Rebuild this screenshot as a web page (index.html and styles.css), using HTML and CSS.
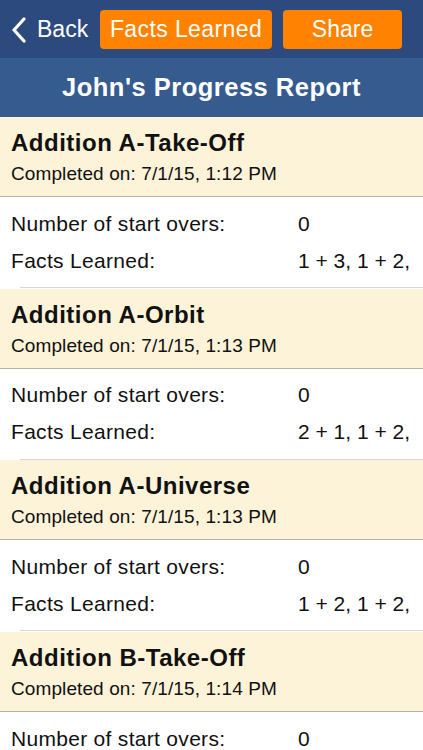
FILE: index.html
```html
<!DOCTYPE html>
<html>
<head>
<meta charset="utf-8">
<link rel="stylesheet" href="styles.css">
</head>
<body>
<div class="nav">
  <div class="back">
    <svg class="chev" width="16" height="26" viewBox="0 0 16 26"><path d="M13 2 L3 13 L13 24" fill="none" stroke="#fff" stroke-width="3.2" stroke-linecap="round" stroke-linejoin="round"/></svg>
    <span>Back</span>
  </div>
  <div class="btn facts">Facts Learned</div>
  <div class="btn share">Share</div>
</div>
<div class="titlebar">John's Progress Report</div>

<div class="section">
  <div class="head">
    <div class="name">Addition A-Take-Off</div>
    <div class="date">Completed on: 7/1/15, 1:12 PM</div>
  </div>
  <div class="rows">
    <div class="row"><span class="label">Number of start overs:</span><span class="val">0</span></div>
    <div class="row"><span class="label">Facts Learned:</span><span class="val">1 + 3, 1 + 2,</span></div>
  </div>
</div>

<div class="section">
  <div class="head">
    <div class="name">Addition A-Orbit</div>
    <div class="date">Completed on: 7/1/15, 1:13 PM</div>
  </div>
  <div class="rows">
    <div class="row"><span class="label">Number of start overs:</span><span class="val">0</span></div>
    <div class="row"><span class="label">Facts Learned:</span><span class="val">2 + 1, 1 + 2,</span></div>
  </div>
</div>

<div class="section">
  <div class="head">
    <div class="name">Addition A-Universe</div>
    <div class="date">Completed on: 7/1/15, 1:13 PM</div>
  </div>
  <div class="rows">
    <div class="row"><span class="label">Number of start overs:</span><span class="val">0</span></div>
    <div class="row"><span class="label">Facts Learned:</span><span class="val">1 + 2, 1 + 2,</span></div>
  </div>
</div>

<div class="section">
  <div class="head">
    <div class="name">Addition B-Take-Off</div>
    <div class="date">Completed on: 7/1/15, 1:14 PM</div>
  </div>
  <div class="rows">
    <div class="row"><span class="label">Number of start overs:</span><span class="val">0</span></div>
    <div class="row"><span class="label">Facts Learned:</span><span class="val">1 + 2, 1 + 2,</span></div>
  </div>
</div>
</body>
</html>
```
FILE: styles.css
```css
* { box-sizing: border-box; }
html, body { margin: 0; padding: 0; }
body {
  width: 423px;
  height: 750px;
  overflow: hidden;
  background: #fff;
  font-family: "Liberation Sans", Arial, sans-serif;
  color: #111;
}
.nav {
  height: 58px;
  background: #2c4a7e;
  display: flex;
  align-items: center;
  padding-left: 11px;
}
.back {
  display: flex;
  align-items: center;
  color: #fff;
  font-size: 23px;
  width: 89px;
}
.chev { margin-right: 10px; margin-top: 1px; }
.btn {
  height: 39px;
  background: #ff8200;
  color: #fff;
  border-radius: 4px;
  display: flex;
  align-items: center;
  justify-content: center;
  font-size: 23px;
  margin-top: 1px;
}
.facts { width: 172px; letter-spacing: 0.4px; }
.share { width: 119px; margin-left: 11px; }
.titlebar {
  height: 59px;
  background: #365b8e;
  color: #fff;
  font-weight: bold;
  font-size: 25.5px;
  letter-spacing: 0.5px;
  display: flex;
  align-items: center;
  justify-content: center;
  padding-bottom: 1px;
}
.section { height: 171.7px; }
.head {
  height: 80px;
  background: #fdf3d8;
  border-bottom: 1px solid #b5b3ac;
  padding: 13px 0 0 11px;
}
.name {
  font-weight: bold;
  font-size: 24px;
  letter-spacing: 0.5px;
  line-height: 26px;
}
.date {
  font-size: 19px;
  letter-spacing: 0.1px;
  line-height: 20px;
  margin-top: 8px;
}
.rows {
  height: 91.7px;
  background: #fff;
  padding-top: 8px;
}
.rows::after {
  content: "";
  display: block;
  height: 1px;
  margin-left: 20px;
  margin-top: 8px;
  background: #d6d6d6;
}
.row {
  display: flex;
  height: 37px;
  align-items: center;
  font-size: 21px;
  padding-left: 11px;
  white-space: nowrap;
}
.label { width: 287px; letter-spacing: 0.3px; }
.val { letter-spacing: 0; }
```
